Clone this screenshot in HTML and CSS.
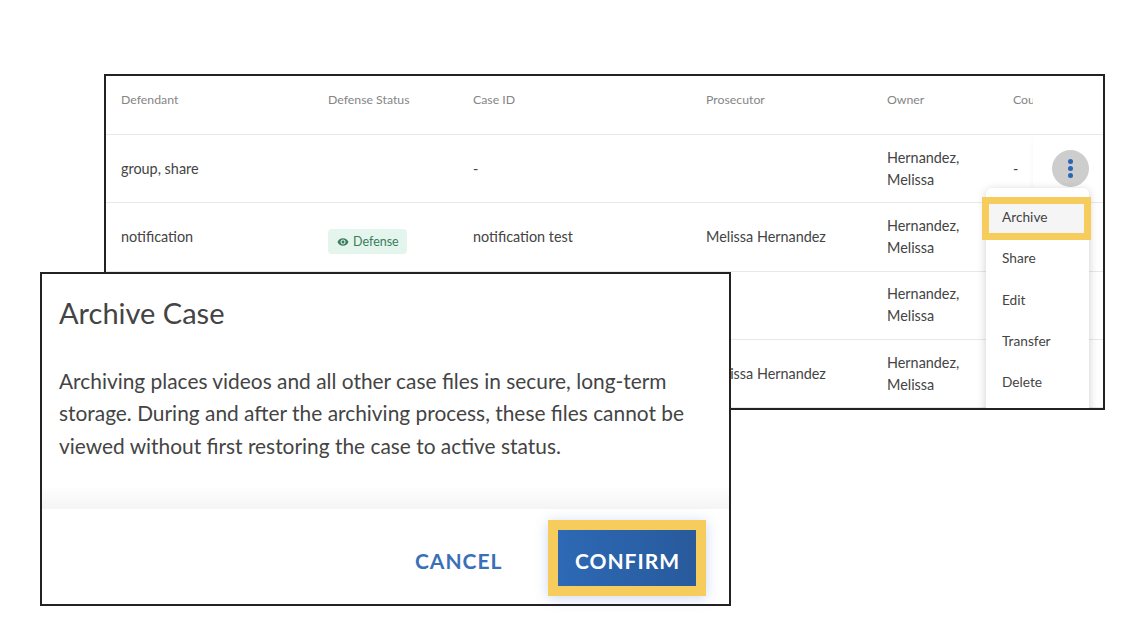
FILE: index.html
```html
<!DOCTYPE html>
<html lang="en">
<head>
    <meta charset="UTF-8">
    <meta name="viewport" content="width=device-width, initial-scale=1.0">
    <title>Archive Case</title>
    <link rel="stylesheet" href="styles.css">
</head>
<body>
    <div class="canvas">
        <div class="case-panel">
            <div class="row head-row">
                <div class="cell">Defendant</div>
                <div class="cell">Defense Status</div>
                <div class="cell">Case ID</div>
                <div class="cell">Prosecutor</div>
                <div class="cell">Owner</div>
                <div class="cell">Court</div>
                <div class="cell action"></div>
            </div>
            <div class="row">
                <div class="cell">group, share</div>
                <div class="cell"></div>
                <div class="cell">-</div>
                <div class="cell"></div>
                <div class="cell">Hernandez, Melissa</div>
                <div class="cell">-</div>
                <div class="cell action">
                    <div class="more-btn"><span></span><span></span><span></span></div>
                </div>
            </div>
            <div class="row">
                <div class="cell">notification</div>
                <div class="cell status-cell">
                    <span class="badge">
                        <svg viewBox="0 0 24 24" width="12" height="12"><path fill="currentColor" d="M12 4.5C7 4.5 2.73 7.61 1 12c1.73 4.39 6 7.5 11 7.5s9.27-3.11 11-7.5c-1.73-4.39-6-7.5-11-7.5zM12 17c-2.76 0-5-2.24-5-5s2.24-5 5-5 5 2.24 5 5-2.24 5-5 5zm0-8c-1.66 0-3 1.34-3 3s1.34 3 3 3 3-1.34 3-3-1.34-3-3-3z"/></svg>
                        Defense
                    </span>
                </div>
                <div class="cell">notification test</div>
                <div class="cell">Melissa Hernandez</div>
                <div class="cell">Hernandez, Melissa</div>
                <div class="cell"></div>
                <div class="cell action"></div>
            </div>
            <div class="row">
                <div class="cell"></div>
                <div class="cell"></div>
                <div class="cell"></div>
                <div class="cell"></div>
                <div class="cell">Hernandez, Melissa</div>
                <div class="cell"></div>
                <div class="cell action"></div>
            </div>
            <div class="row">
                <div class="cell"></div>
                <div class="cell"></div>
                <div class="cell"></div>
                <div class="cell">Melissa Hernandez</div>
                <div class="cell">Hernandez, Melissa</div>
                <div class="cell"></div>
                <div class="cell action"></div>
            </div>
            <ul class="menu">
                <li class="marked">Archive</li>
                <li>Share</li>
                <li>Edit</li>
                <li>Transfer</li>
                <li>Delete</li>
            </ul>
        </div>

        <div class="archive-modal">
            <div class="modal-body">
                <h2>Archive Case</h2>
                <p>Archiving places videos and all other case files in secure, long-term storage. During and after the archiving process, these files cannot be viewed without first restoring the case to active status.</p>
            </div>
            <div class="modal-footer">
                <span class="cancel-btn">CANCEL</span>
                <span class="confirm-btn">CONFIRM</span>
            </div>
        </div>
    </div>
</body>
</html>
```

FILE: styles.css
```css
body {
    margin: 0;
    background-color: #fff;
    color: #444;
    font-family: 'Lato', sans-serif;
}
.canvas {
    position: relative;
    width: 1124px;
    height: 620px;
    overflow: hidden;
}
.case-panel {
    position: absolute;
    left: 104px;
    top: 74px;
    width: 997px;
    height: 332px;
    border: 2px solid #222;
    background-color: #fff;
    overflow: hidden;
}
.row {
    display: grid;
    grid-template-columns: 207px 145px 233px 181px 126px 35px 70px;
    height: 67.3px;
    border-bottom: 1px solid #e8e8e8;
    align-items: center;
    font-size: 14.4px;
    line-height: 22px;
}
.head-row {
    height: 58px;
    align-items: start;
    font-size: 12.3px;
    color: #858585;
}
.head-row .cell {
    padding-top: 13px;
}
.cell {
    padding-left: 15px;
    min-width: 0;
    overflow: hidden;
    white-space: nowrap;
}
.cell:nth-child(5) {
    white-space: normal;
    padding-right: 30px;
}
.status-cell {
    overflow: visible;
}
.cell.action {
    padding-left: 0;
    align-self: stretch;
    background-color: #fff;
    overflow: visible;
    display: flex;
    align-items: center;
    box-shadow: -4px 0 6px -4px rgba(0, 0, 0, 0.04);
}
.head-row .cell.action {
    box-shadow: none;
}
.more-btn {
    margin-left: 19px;
    width: 37px;
    height: 37px;
    border-radius: 50%;
    background-color: #cdcdcd;
    display: flex;
    flex-direction: column;
    align-items: center;
    justify-content: center;
    gap: 2px;
}
.more-btn span {
    width: 5px;
    height: 5px;
    border-radius: 50%;
    background-color: #2b66b5;
}
.badge {
    display: inline-flex;
    align-items: center;
    gap: 4px;
    position: relative;
    top: 5px;
    height: 25px;
    padding: 0 8px 0 9px;
    border-radius: 4px;
    background-color: #e3f5ec;
    color: #3a7d5c;
    font-size: 12.5px;
}
.menu {
    position: absolute;
    left: 880px;
    top: 112px;
    width: 103px;
    margin: 0;
    padding: 9px 0 0;
    list-style: none;
    height: 240px;
    background-color: #fff;
    border-radius: 6px 6px 0 0;
    box-shadow: 0 2px 10px rgba(0, 0, 0, 0.2);
    font-size: 13.7px;
}
.menu li {
    position: relative;
    height: 41.3px;
    line-height: 39.5px;
    padding-left: 16px;
}
.menu li.marked {
    background-color: #f5f5f5;
}
.menu li.marked::after {
    content: "";
    position: absolute;
    left: -4px;
    right: -2px;
    top: 0;
    bottom: -2px;
    border: 7px solid #f6cc5c;
}
.archive-modal {
    position: absolute;
    left: 40px;
    top: 272px;
    width: 687px;
    height: 330px;
    border: 2px solid #222;
    background-color: #fff;
    display: flex;
    flex-direction: column;
}
.modal-body {
    height: 235px;
    padding: 0 17px;
    box-sizing: border-box;
    background: linear-gradient(to bottom, #fff 212px, #f4f4f4 100%);
}
.modal-body h2 {
    margin: 0;
    padding-top: 21px;
    font-size: 29px;
    line-height: 36px;
    font-weight: 400;
}
.modal-body p {
    margin: 33.5px 0 0;
    font-size: 20.9px;
    line-height: 32.7px;
}
.modal-footer {
    flex: 1;
    display: flex;
    align-items: center;
    justify-content: flex-end;
    gap: 45.5px;
    padding-top: 2px;
    padding-right: 23px;
}
.cancel-btn {
    padding-top: 5px;
    color: #3a70b8;
    font-size: 21px;
    font-weight: 700;
    letter-spacing: 1px;
}
.confirm-btn {
    box-sizing: border-box;
    width: 158px;
    height: 76px;
    padding-top: 5px;
    padding-left: 1px;
    border: 10px solid #f6cc5c;
    background: linear-gradient(to right, #2d69b5, #285a9c) padding-box;
    box-shadow: 0 2px 12px rgba(60, 100, 200, 0.25);
    color: #fff;
    font-size: 21px;
    font-weight: 700;
    letter-spacing: 1px;
    display: flex;
    align-items: center;
    justify-content: center;
}
```
